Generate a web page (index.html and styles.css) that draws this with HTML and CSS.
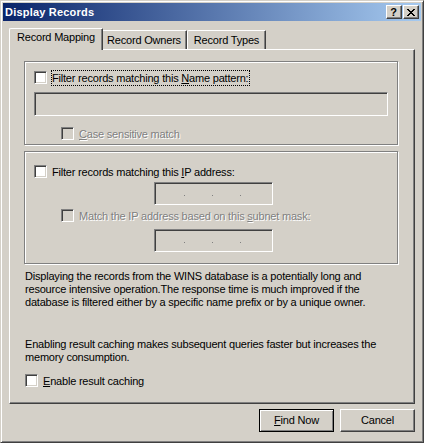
FILE: index.html
```html
<!DOCTYPE html>
<html>
<head>
<meta charset="utf-8">
<title>Display Records</title>
<link rel="stylesheet" href="styles.css">
</head>
<body>
<div class="window">
  <div class="titlebar">
    <span class="title">Display Records</span>
    <div class="caption-btns">
      <span class="cap-btn help">?</span>
      <span class="cap-btn close"><svg width="8" height="7" viewBox="0 0 8 7" shape-rendering="crispEdges"><path fill="#000" d="M0 0h2v1H0zM6 0h2v1H6zM1 1h2v1H1zM5 1h2v1H5zM2 2h4v1H2zM3 3h2v1H3zM2 4h4v1H2zM1 5h2v1H1zM5 5h2v1H5zM0 6h2v1H0zM6 6h2v1H6z"/></svg></span>
    </div>
  </div>
  <div class="client">
    <div class="tabs">
      <div class="tab selected tab-mapping">Record Mapping</div>
      <div class="tab tab-owners">Record Owners</div>
      <div class="tab tab-types">Record Types</div>
    </div>
    <div class="panel">
      <div class="group group-name">
        <div class="row">
          <span class="cb"></span>
          <span class="lbl focus">Filter records matching this <u>N</u>ame pattern:</span>
        </div>
        <div class="field field-name"></div>
        <div class="row row-indent row-case disabled">
          <span class="cb cb-dis"></span>
          <span class="lbl"><u>C</u>ase sensitive match</span>
        </div>
      </div>
      <div class="group group-ip">
        <div class="row">
          <span class="cb"></span>
          <span class="lbl">Filter records matching this <u>I</u>P address:</span>
        </div>
        <div class="field ip ip-addr"><i></i><i></i><i></i></div>
        <div class="row row-indent row-mask disabled">
          <span class="cb cb-dis"></span>
          <span class="lbl">Match the IP address based on this <u>s</u>ubnet mask:</span>
        </div>
        <div class="field ip ip-mask"><i></i><i></i><i></i></div>
      </div>
      <p class="desc">Displaying the records from the WINS database is a potentially long and<br>resource intensive operation.The response time is much improved if the<br>database is filtered either by a specific name prefix or by a unique owner.</p>
      <p class="desc desc2">Enabling result caching makes subsequent queries faster but increases the<br>memory consumption.</p>
      <div class="row row-cache">
        <span class="cb"></span>
        <span class="lbl"><u>E</u>nable result caching</span>
      </div>
    </div>
    <div class="buttons">
      <div class="btn btn-default"><span><u>F</u>ind Now</span></div>
      <div class="btn"><span>Cancel</span></div>
    </div>
  </div>
</div>
</body>
</html>
```

FILE: styles.css
```css
* { box-sizing: border-box; }
html, body {
  margin: 0;
  padding: 0;
  background: #d4d0c8;
}
body {
  font-family: "Liberation Sans", Arial, sans-serif;
  font-size: 11px;
  letter-spacing: -0.2px;
  color: #000;
}
.window {
  width: 424px;
  height: 443px;
  background: #d4d0c8;
  border: 1px solid;
  border-color: #d4d0c8 #404040 #404040 #d4d0c8;
  box-shadow: inset 1px 1px #fff, inset -1px -1px #808080;
  padding: 2px;
  display: flex;
  flex-direction: column;
}
.titlebar {
  height: 18px;
  background: linear-gradient(to right, #0a246a, #a6caf0);
  display: flex;
  align-items: center;
  justify-content: space-between;
  padding: 0 2px 0 2px;
}
.title {
  color: #fff;
  font-weight: bold;
  font-size: 11px;
  letter-spacing: 0.2px;
}
.caption-btns {
  display: flex;
  gap: 1px;
}
.cap-btn {
  width: 16px;
  height: 14px;
  background: #d4d0c8;
  border: 1px solid;
  border-color: #fff #404040 #404040 #fff;
  box-shadow: inset -1px -1px #808080;
  display: flex;
  align-items: center;
  justify-content: center;
}
.help {
  font-weight: bold;
  font-size: 11px;
  line-height: 12px;
  letter-spacing: 0;
  padding-right: 1px;
}
.close svg { display: block; margin-right: 1px; }
.client {
  flex: 1;
  display: flex;
  flex-direction: column;
}
.tabs {
  display: flex;
  align-items: flex-end;
  height: 21px;
  margin: 7px 0 0 8px;
}
.tab {
  height: 19px;
  border-top: 1px solid #fff;
  border-left: 1px solid #fff;
  border-right: 1px solid #404040;
  box-shadow: inset -1px 0 #808080;
  border-top-left-radius: 2px;
  border-top-right-radius: 1px;
  text-align: center;
  padding-top: 3px;
  line-height: 13px;
  white-space: nowrap;
  background: #d4d0c8;
}
.tab-mapping { width: 94px; }
.tab-owners { width: 86px; }
.tab-types { width: 79px; }
.tab.selected {
  height: 22px;
  margin: 0 -2px -1px -2px;
  padding-top: 2px;
  position: relative;
  z-index: 1;
}
.panel {
  margin-left: 6px;
  width: 406px;
  height: 355px;
  border: 1px solid;
  border-color: #fff #404040 #404040 #fff;
  box-shadow: inset -1px -1px #808080;
  padding: 11px 0 0 14px;
}
.group {
  width: 374px;
  border: 1px solid #808080;
  box-shadow: inset 1px 1px #fff, 1px 1px #fff;
  padding-left: 9px;
}
.group-name { height: 84px; padding-top: 8px; }
.group-ip { height: 113px; padding-top: 12px; margin-top: 6px; }
.row {
  display: flex;
  align-items: flex-start;
  height: 16px;
  white-space: nowrap;
}
.row-indent { margin-left: 27px; }
.cb {
  flex: none;
  width: 13px;
  height: 13px;
  margin-top: 1px;
  background: #fff;
  border: 1px solid;
  border-color: #808080 #fff #fff #808080;
  box-shadow: inset 1px 1px #404040, inset -1px -1px #d4d0c8;
}
.cb-dis { background: #d4d0c8; }
.lbl {
  margin-left: 4px;
  border: 1px solid transparent;
  padding-right: 1px;
  line-height: 14px;
}
.focus { border: 1px dotted #000; }
.disabled .lbl {
  color: #808080;
  text-shadow: 1px 1px #fff;
}
.field {
  border: 1px solid;
  border-color: #808080 #fff #fff #808080;
  box-shadow: inset 1px 1px #404040, inset -1px -1px #d4d0c8;
  background: #d4d0c8;
}
.field-name { width: 354px; height: 24px; margin-top: 6px; }
.row-case { margin-top: 10px; }
.ip {
  width: 119px;
  height: 23px;
  margin-left: 120px;
  display: flex;
  gap: 27px;
  padding: 12px 0 0 29px;
}
.ip i {
  display: block;
  width: 1px;
  height: 1px;
  background: #808080;
}
.ip-addr { margin-top: 2px; }
.row-mask { margin-top: 3px; }
.ip-mask { margin-top: 5px; }
.desc {
  margin: 6px 0 0 1px;
  line-height: 13px;
  white-space: nowrap;
}
.desc2 { margin-top: 29px; }
.row-cache { margin: 9px 0 0 1px; }
.buttons {
  display: flex;
  justify-content: flex-end;
  gap: 6px;
  margin-top: 5px;
  padding-right: 6px;
}
.btn {
  width: 75px;
  height: 23px;
  background: #d4d0c8;
  border: 1px solid;
  border-color: #fff #404040 #404040 #fff;
  box-shadow: inset -1px -1px #808080;
  display: flex;
  align-items: center;
  justify-content: center;
  line-height: 13px;
}
.btn-default {
  border-color: #000;
  box-shadow: inset 1px 1px #fff, inset -1px -1px #808080;
}
```
